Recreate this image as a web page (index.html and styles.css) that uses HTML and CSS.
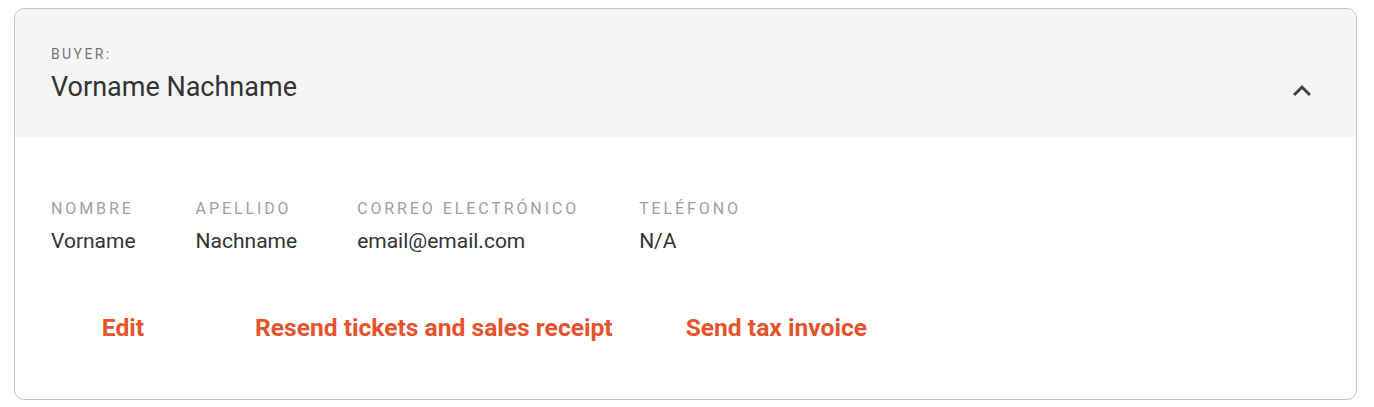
FILE: index.html
```html
<!DOCTYPE html>
<html lang="es">
<head>
  <meta charset="UTF-8">
  <title>Buyer</title>
  <link rel="stylesheet" href="styles.css">
</head>
<body>
  <div class="tarjeta">
    <div class="cabecera">
      <div class="comprador">
        <p class="etiqueta-comprador">Buyer:</p>
        <h2 class="nombre-comprador">Vorname Nachname</h2>
      </div>
      <button class="plegar" type="button" aria-label="Plegar">
        <svg viewBox="0 0 24 24" width="36" height="36">
          <path d="M12 8l-6 6 1.41 1.41L12 10.83l4.59 4.58L18 14z" fill="#424242"/>
        </svg>
      </button>
    </div>

    <div class="cuerpo">
      <div class="datos">
        <div class="dato">
          <span class="etiqueta">Nombre</span>
          <span class="valor">Vorname</span>
        </div>
        <div class="dato">
          <span class="etiqueta">Apellido</span>
          <span class="valor">Nachname</span>
        </div>
        <div class="dato">
          <span class="etiqueta">Correo electrónico</span>
          <span class="valor">email@email.com</span>
        </div>
        <div class="dato">
          <span class="etiqueta">Teléfono</span>
          <span class="valor">N/A</span>
        </div>
      </div>

      <div class="acciones">
        <button class="accion accion-editar" type="button">Edit</button>
        <button class="accion" type="button">Resend tickets and sales receipt</button>
        <button class="accion" type="button">Send tax invoice</button>
      </div>
    </div>
  </div>
</body>
</html>
```

FILE: styles.css
```css
body {
  font-family: Roboto, "Liberation Sans", sans-serif;
  margin: 0;
  padding: 8px 17px 7px 14px;
  background: #fff;
}

.tarjeta {
  border: 1px solid #c4c4c4;
  border-radius: 10px;
  overflow: hidden;
  height: 390px;
}

.cabecera {
  background: #f5f5f5;
  height: 128px;
  padding: 3px 36px 0 36px;
  display: flex;
  align-items: center;
  justify-content: space-between;
  box-sizing: border-box;
}

.etiqueta-comprador {
  margin: 0 0 9px;
  font-size: 14px;
  letter-spacing: 2.4px;
  text-transform: uppercase;
  color: #757575;
}

.nombre-comprador {
  margin: 0;
  font-size: 27px;
  font-weight: 400;
  color: #333;
}

.plegar {
  background: none;
  border: none;
  padding: 0;
  align-self: flex-end;
  margin-bottom: 28px;
  display: flex;
  cursor: pointer;
}

.cuerpo {
  padding: 62px 36px 0;
}

.datos {
  display: flex;
  gap: 60px;
}

.dato {
  display: flex;
  flex-direction: column;
  gap: 11px;
}

.etiqueta {
  font-size: 16px;
  letter-spacing: 2.9px;
  text-transform: uppercase;
  color: #9e9e9e;
}

.valor {
  font-size: 21px;
  color: #333;
}

.acciones {
  display: flex;
  align-items: center;
  margin-top: 52px;
}

.accion {
  background: none;
  border: none;
  font-family: inherit;
  font-size: 24.6px;
  font-weight: 700;
  color: #e4532d;
  padding: 8px 13px;
  margin-right: 47px;
  cursor: pointer;
}

.accion-editar {
  min-width: 144px;
}
```
